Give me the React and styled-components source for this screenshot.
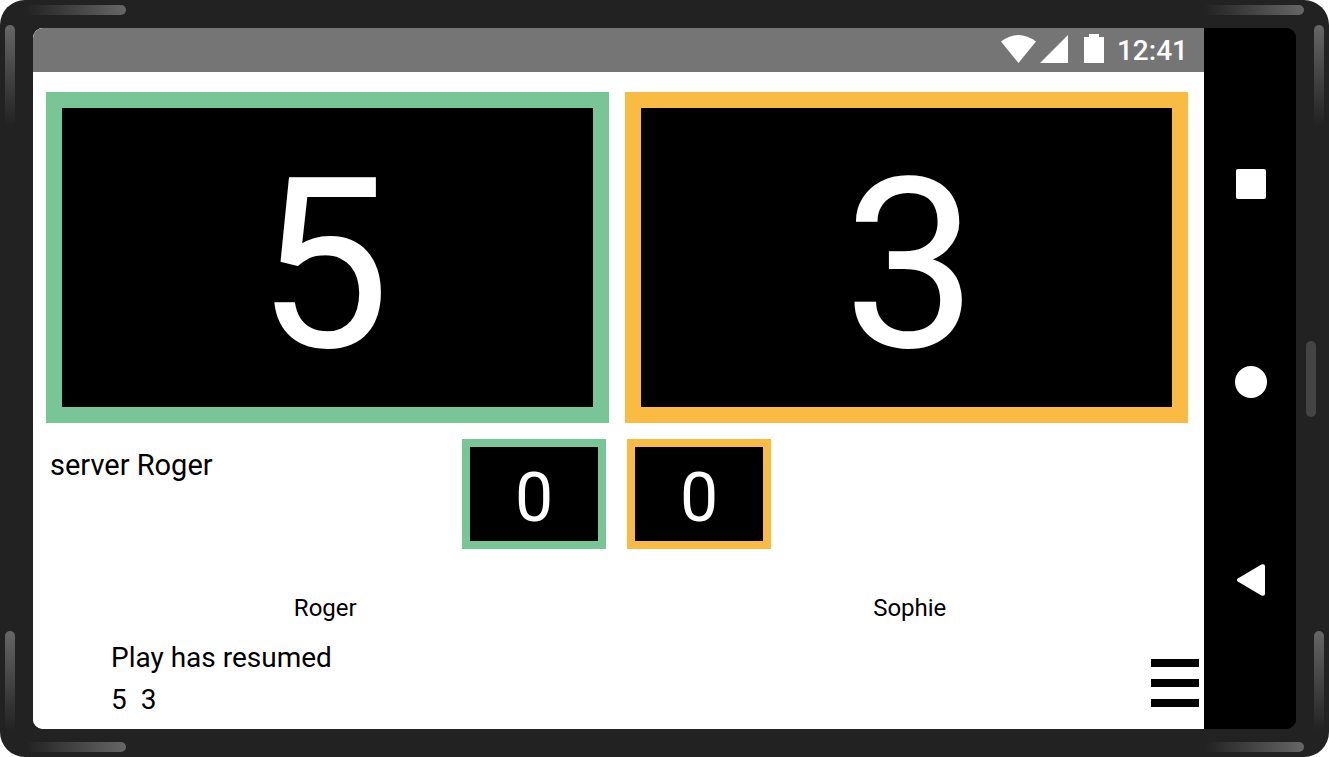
import React from "react";
import styled, { createGlobalStyle, css } from "styled-components";

const GREEN = "#78c596";
const AMBER = "#f9bb42";

const GlobalStyle = createGlobalStyle`
  *, *::before, *::after { box-sizing: border-box; }
  body {
    margin: 0;
    background: #fff;
    color: #000;
    font-family: Roboto, "Liberation Sans", sans-serif;
  }
  h2, p { margin: 0; font-weight: 400; }
`;

const Device = styled.div`
  position: relative;
  display: flex;
  min-height: 100vh;
  padding: 28px 33px;
  border-radius: 25px;
  background: #222;
`;

const Screen = styled.div`
  flex: 1;
  display: flex;
  min-width: 0;
  border-radius: 10px;
  overflow: hidden;
  background: linear-gradient(to right, #fff 50%, #000 50%);
`;

/* Reflections on the rounded corners of the casing */
const Glint = styled.span`
  position: absolute;
  border-radius: 5px;
  ${({ $side }) => ($side === "left" ? "left: 5px;" : "right: 5px;")}
  ${({ $edge }) => ($edge === "top" ? "top: 25px;" : "bottom: 26px;")}
  width: 10px;
  height: 100px;
  background: linear-gradient(to bottom, #666, #222);
  ${({ $flat, $side, $edge }) =>
    $flat &&
    css`
      ${$side}: ${$side === "left" ? 26 : 25}px;
      ${$edge}: 5px;
      width: 100px;
      height: 10px;
      background: linear-gradient(to right, #222, #666);
    `}
`;

const PowerKey = styled.span`
  position: absolute;
  right: 13px;
  top: 50%;
  width: 10px;
  height: 76px;
  margin-top: -38px;
  border-radius: 5px;
  background: #444;
`;

const Page = styled.div`
  flex: 1;
  display: flex;
  flex-direction: column;
  min-width: 0;
  background: #fff;
`;

const StatusBar = styled.header`
  display: flex;
  align-items: center;
  justify-content: flex-end;
  height: 44px;
  padding: 2px 16px 0 0;
  background: #757575;
  color: #fff;
  font-size: 28px;
  font-weight: 500;
  line-height: 40px;
`;

const StatusIcons = styled.svg`
  width: 104px;
  height: 30px;
  margin: 0 12px 4px 0;
  fill: currentColor;
`;

const Board = styled.main`
  flex: 1;
  display: flex;
  flex-direction: column;
  padding-top: 20px;
`;

const Scores = styled.section`
  flex: 1;
  display: grid;
  grid-template-columns: 1fr 1fr;
  gap: 16px;
  min-height: 240px;
  padding: 0 16px 0 13px;
`;

const ScoreBox = styled.output`
  display: flex;
  align-items: center;
  justify-content: center;
  background: #000;
  color: #fff;
  border: 16px solid ${({ $color }) => $color};
  font-size: 238px;
  line-height: 240px;
  padding-top: 16px;
  ${Scores} > &:first-child { padding-right: 8px; }
  ${Scores} > &:last-child { padding-left: 8px; }
`;

const SetBox = styled(ScoreBox)`
  width: 144px;
  height: 110px;
  border-width: 8px;
  font-size: 68px;
  line-height: 80px;
  padding-top: 8px;
`;

const Sets = styled.section`
  display: grid;
  grid-template-columns: 1fr 1fr;
  gap: 21px;
  margin-top: 16px;
  padding: 0 17px 0 13px;
`;

const ServerSide = styled.div`
  display: flex;
  justify-content: space-between;
  padding-left: 4px;
`;

const Server = styled.p`
  padding-top: 8px;
  font-size: 29px;
  line-height: 36px;
`;

const Players = styled.section`
  display: grid;
  grid-template-columns: 1fr 1fr;
  margin-top: 43px;
  padding-right: 2px;
  text-align: center;
`;

const PlayerName = styled.h2`
  font-size: 24px;
  line-height: 32px;
`;

const Footer = styled.footer`
  display: flex;
  align-items: flex-end;
  justify-content: space-between;
  margin-top: 13px;
  padding: 0 5px 8px 78px;
`;

const Message = styled.p`
  font-size: 28px;
  line-height: 42px;
  white-space: pre;
`;

const MenuButton = styled.button`
  display: flex;
  flex-direction: column;
  gap: 12px;
  width: 48px;
  margin-bottom: 14px;
  padding: 0;
  border: 0;
  background: none;
`;

const MenuBar = styled.span`
  width: 100%;
  height: 8px;
  background: #000;
`;

const NavBar = styled.nav`
  display: flex;
  flex-direction: column;
  align-items: center;
  justify-content: center;
  gap: 150px;
  width: 92px;
  padding: 7px 0 0 2px;
  background: #000;
`;

const NavButton = styled.button`
  display: flex;
  align-items: center;
  justify-content: center;
  width: 48px;
  height: 48px;
  padding: 0;
  border: 0;
  background: none;
  color: #fff;

  svg {
    width: 32px;
    height: 32px;
    fill: currentColor;
  }
`;

const players = [
  { name: "Roger", score: 5, sets: 0, color: GREEN },
  { name: "Sophie", score: 3, sets: 0, color: AMBER },
];

const glints = [
  ["left", "top"],
  ["right", "top"],
  ["left", "bottom"],
  ["right", "bottom"],
];

export default function App() {
  const [home, away] = players;
  return (
    <>
      <GlobalStyle />
      <Device>
        {glints.map(([side, edge]) => (
          <React.Fragment key={side + edge}>
            <Glint $side={side} $edge={edge} />
            <Glint $side={side} $edge={edge} $flat />
          </React.Fragment>
        ))}
        <PowerKey />
        <Screen>
          <Page>
            <StatusBar>
              <StatusIcons viewBox="0 0 104 30" aria-hidden="true">
                <path d="M0 7.5Q17.5-5.5 35 7.5L17.5 29Z" />
                <path d="M39 29H67V1Z" />
                <path d="M83 3H88V0H98V3H103V29H83Z" />
              </StatusIcons>
              <time>12:41</time>
            </StatusBar>
            <Board>
              <Scores>
                {players.map((p) => (
                  <ScoreBox key={p.name} $color={p.color} aria-label={`${p.name} points`}>
                    {p.score}
                  </ScoreBox>
                ))}
              </Scores>
              <Sets>
                <ServerSide>
                  <Server>server {home.name}</Server>
                  <SetBox $color={home.color}>{home.sets}</SetBox>
                </ServerSide>
                <SetBox $color={away.color}>{away.sets}</SetBox>
              </Sets>
              <Players>
                {players.map((p) => (
                  <PlayerName key={p.name}>{p.name}</PlayerName>
                ))}
              </Players>
              <Footer>
                <div>
                  <Message>Play has resumed</Message>
                  <Message>{`${home.score}  ${away.score}`}</Message>
                </div>
                <MenuButton type="button" aria-label="Menu">
                  <MenuBar />
                  <MenuBar />
                  <MenuBar />
                </MenuButton>
              </Footer>
            </Board>
          </Page>
          <NavBar>
            <NavButton type="button" aria-label="Recent apps">
              <svg viewBox="0 0 32 32">
                <rect x="1" y="1" width="30" height="30" rx="2" />
              </svg>
            </NavButton>
            <NavButton type="button" aria-label="Home">
              <svg viewBox="0 0 32 32">
                <circle cx="16" cy="16" r="16" />
              </svg>
            </NavButton>
            <NavButton type="button" aria-label="Back">
              <svg viewBox="0 0 32 32">
                <path d="M2.8 14.6L26.4.6Q30 -.8 30 2.6V29.4Q30 32.8 26.4 31.4L2.8 17.4Q1 16 2.8 14.6Z" />
              </svg>
            </NavButton>
          </NavBar>
        </Screen>
      </Device>
    </>
  );
}
